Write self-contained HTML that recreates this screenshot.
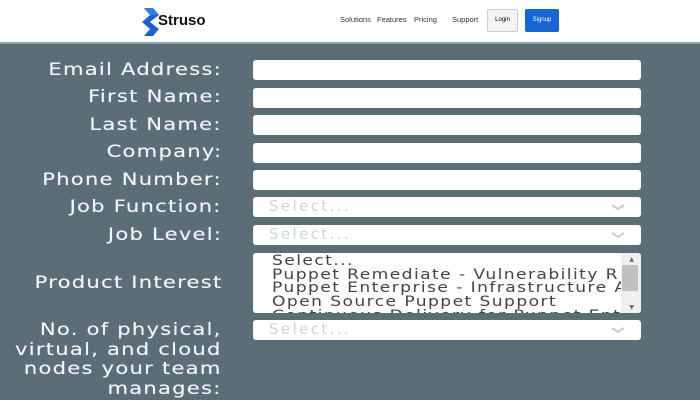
<!DOCTYPE html>
<html><head><style>
*{margin:0;padding:0;box-sizing:border-box}
body{width:700px;height:400px;overflow:hidden;background:#5b6e77;font-family:"DejaVu Sans","Liberation Sans",sans-serif;position:relative}
.hdr{position:absolute;left:0;top:0;width:700px;height:44px;background:#fff;border-bottom:2px solid #8ea0ab}
.nav{position:absolute;top:15px;font-size:7.5px;color:#333;font-family:"Liberation Sans",sans-serif}
.lbl{position:absolute;right:478px;margin-top:1px;color:#f2f4f5;font-size:17px;letter-spacing:1px;text-align:right;line-height:19.5px;white-space:nowrap;text-shadow:0 0 0.4px #f2f4f5;transform:scaleX(1.24);transform-origin:right top}
.in{position:absolute;left:253px;width:388px;height:20px;background:#fff;border-radius:3px}
.sel{color:#d0d4d6;font-size:15px;letter-spacing:2.4px;padding:0 0 0 16px;line-height:19px}
.chev{position:absolute;right:16px;top:7px;width:14px;height:6px}
</style></head><body>
<div class="hdr">
 <svg style="position:absolute;left:142px;top:8px" width="18" height="28" viewBox="0 0 18 28"><path d="M2 0H11L17 7L8 14L17 21L11 28H2L8 21L0 14L8 7Z" fill="#1e5fd6"/><path d="M2 0H11L17 7H8Z" fill="#2f7cf0"/></svg>
 <div style="position:absolute;left:158px;top:12px;font-size:15px;font-weight:bold;font-family:'Liberation Sans',sans-serif;color:#111">Struso</div>
 <div class="nav" style="left:340px">Solutions</div>
 <div class="nav" style="left:377px">Features</div>
 <div class="nav" style="left:414px">Pricing</div>
 <div class="nav" style="left:452px">Support</div>
 <div style="position:absolute;left:487px;top:9px;width:31px;height:23px;background:#f3f3f3;border:1px solid #ccc;border-radius:2px;font-size:6px;text-align:center;line-height:21px;font-family:'Liberation Sans',sans-serif">Login</div>
 <div style="position:absolute;left:525px;top:9px;width:34px;height:23px;background:#1565d8;border-radius:2px;font-size:6px;color:#fff;text-align:center;line-height:23px;font-family:'Liberation Sans',sans-serif">Signup</div>
</div>
<div class="lbl" style="top:60px">Email Address:</div><div class="in" style="top:60px"></div>
<div class="lbl" style="top:87px">First Name:</div><div class="in" style="top:88px"></div>
<div class="lbl" style="top:115px">Last Name:</div><div class="in" style="top:115px"></div>
<div class="lbl" style="top:142px">Company:</div><div class="in" style="top:143px"></div>
<div class="lbl" style="top:170px">Phone Number:</div><div class="in" style="top:170px"></div>
<div class="lbl" style="top:197px">Job Function:</div><div class="in sel" style="top:197px">Select...<svg class="chev" viewBox="0 0 14 6"><path d="M1 1L7 5L13 1" stroke="#ccc" stroke-width="2" fill="none"/></svg></div>
<div class="lbl" style="top:225px">Job Level:</div><div class="in sel" style="top:225px">Select...<svg class="chev" viewBox="0 0 14 6"><path d="M1 1L7 5L13 1" stroke="#ccc" stroke-width="2" fill="none"/></svg></div>
<div class="lbl" style="top:273px">Product Interest</div>
<div class="in" style="top:253px;height:60px;overflow:hidden">
 <div style="position:absolute;left:19px;top:2px;font-size:14.5px;letter-spacing:1.2px;line-height:13.7px;color:#444;white-space:nowrap;transform:scaleX(1.18);transform-origin:left top">Select...<br>Puppet Remediate - Vulnerability R<br>Puppet Enterprise - Infrastructure A<br>Open Source Puppet Support<br>Continuous Delivery for Puppet Ent</div>
 <div style="position:absolute;right:0;top:0;width:20px;height:60px;background:#f0f0f0"></div>
 <div style="position:absolute;right:3px;top:12px;width:16px;height:26px;background:#c1c1c1"></div>
 <div style="position:absolute;right:7px;top:3px;font-size:6px;color:#666">▲</div>
 <div style="position:absolute;right:7px;bottom:2px;font-size:6px;color:#666">▼</div>
</div>
<div class="lbl" style="top:320px">No. of physical,<br>virtual, and cloud<br>nodes your team<br>manages:</div>
<div class="in sel" style="top:320px">Select...<svg class="chev" viewBox="0 0 14 6"><path d="M1 1L7 5L13 1" stroke="#ccc" stroke-width="2" fill="none"/></svg></div>
</body></html>
